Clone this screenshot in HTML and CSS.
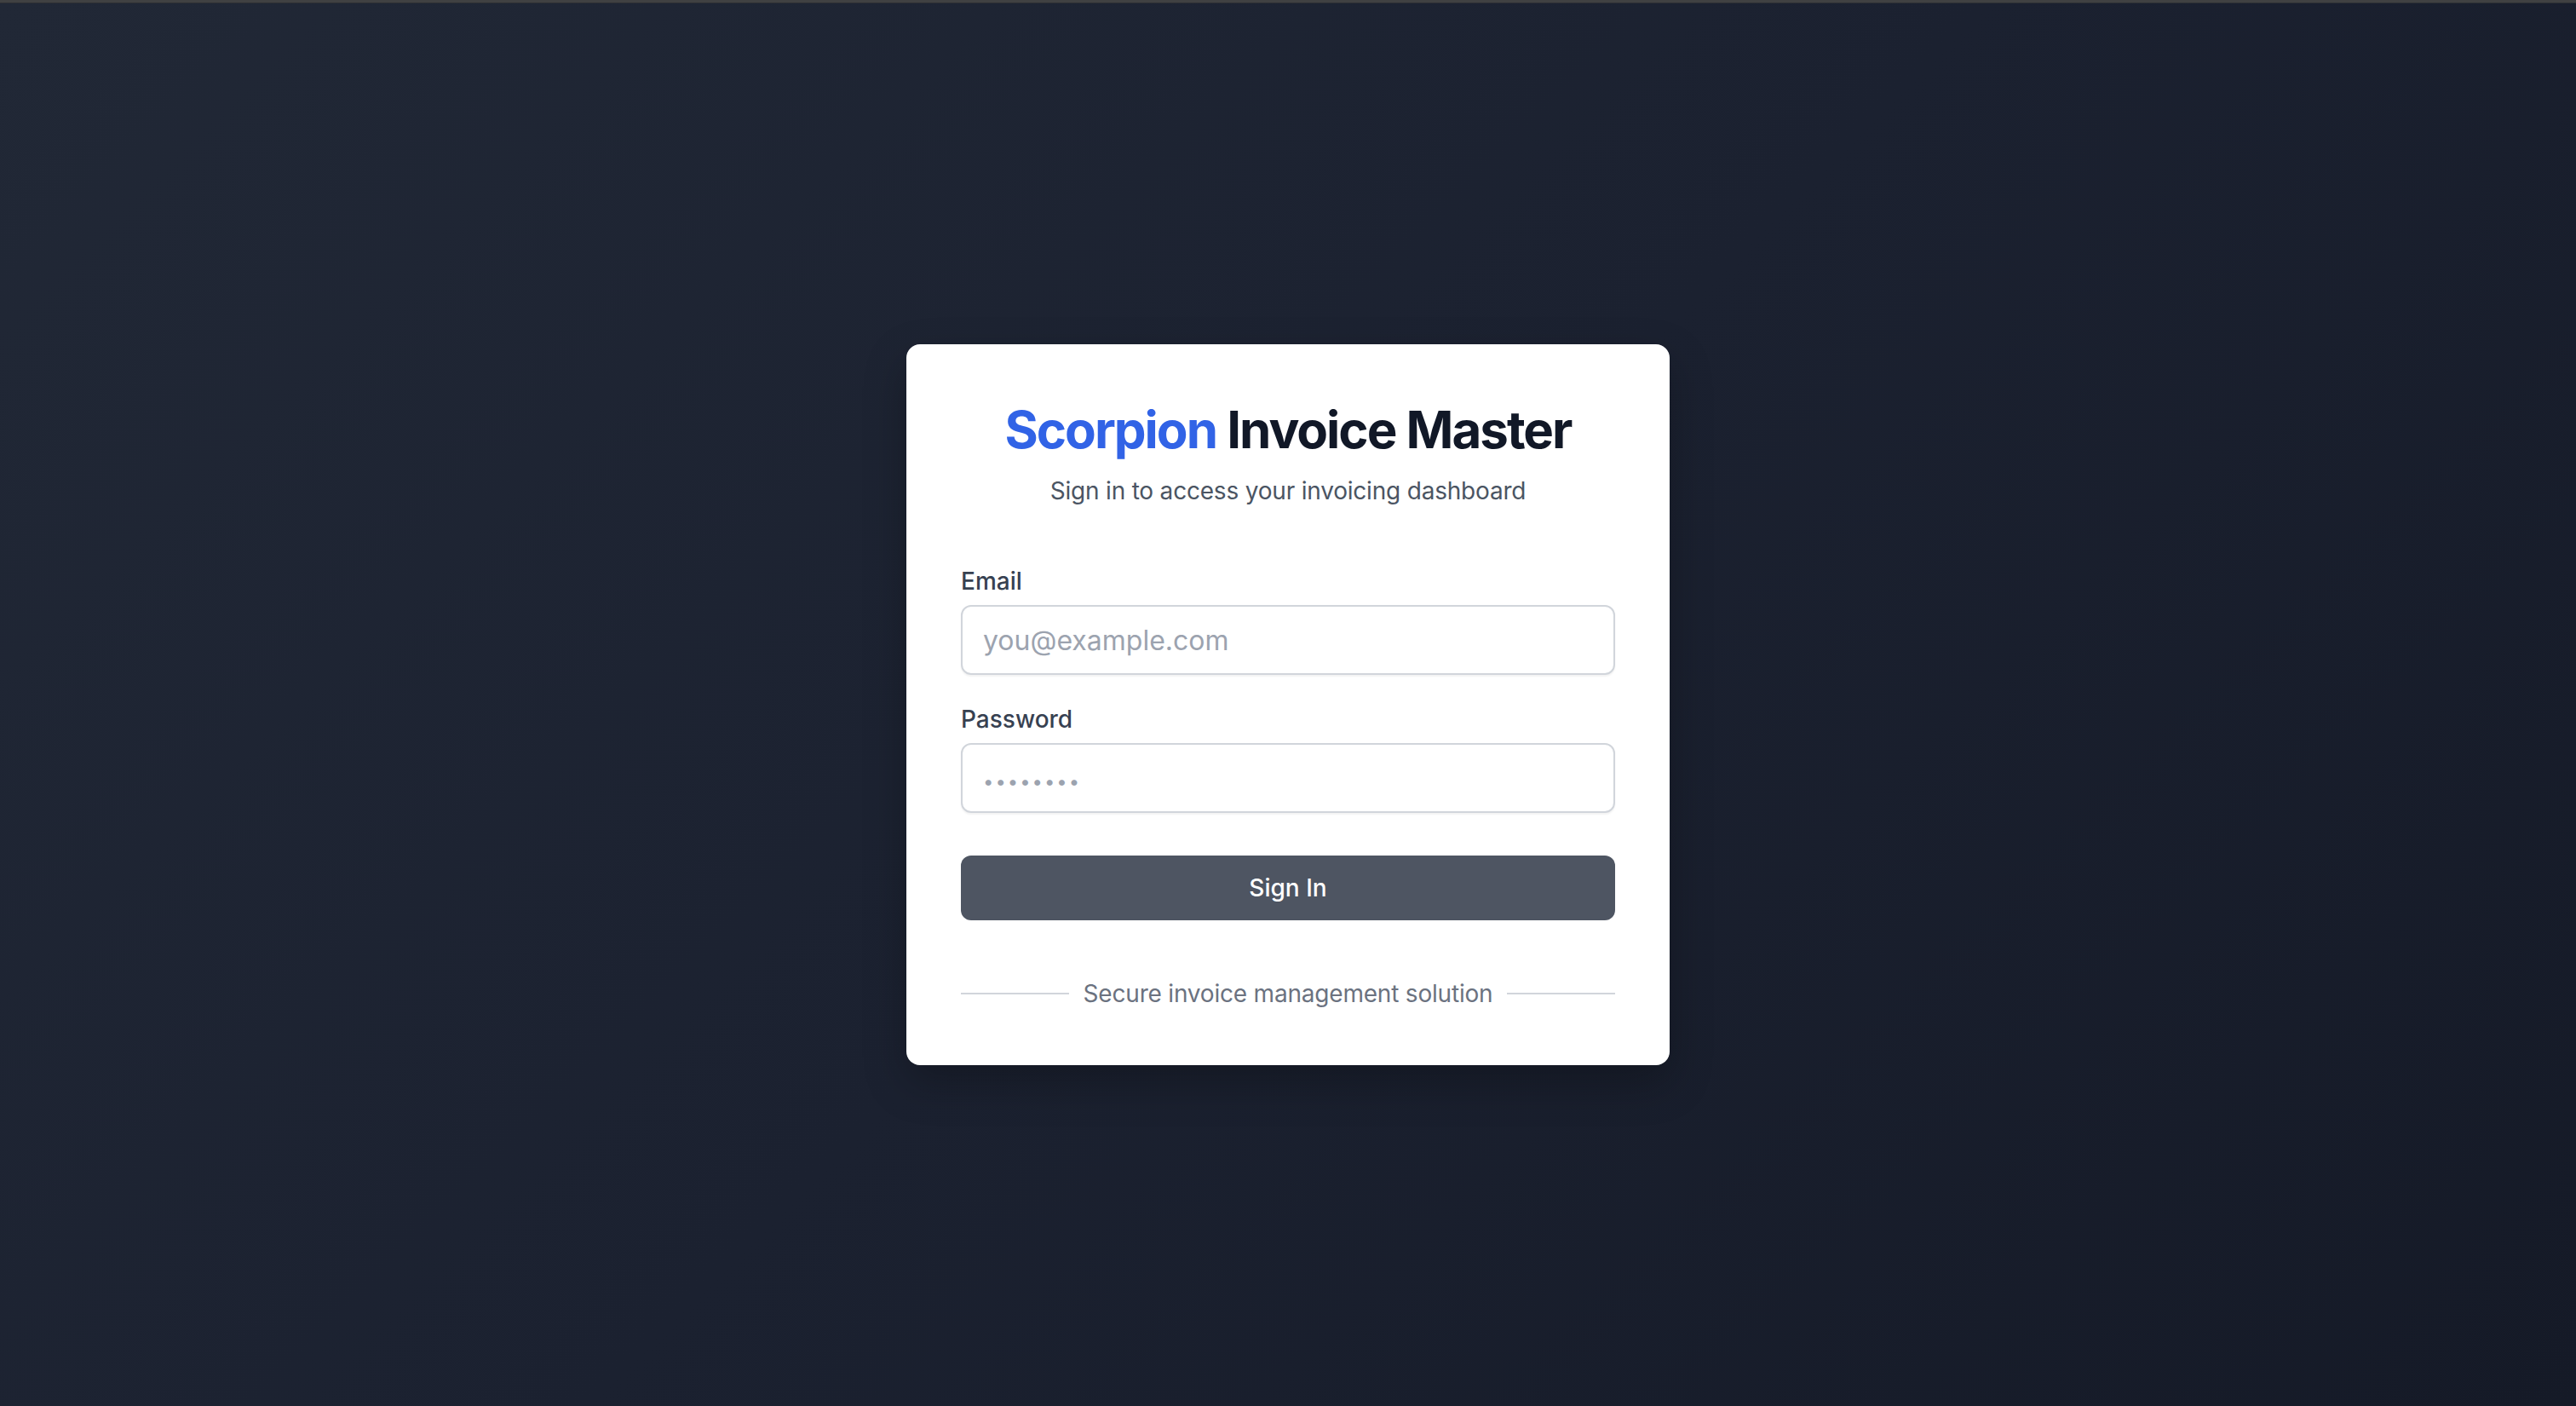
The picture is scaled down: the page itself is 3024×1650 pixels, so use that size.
FILE: index.html
```html
<!DOCTYPE html>
<html lang="en">
<head>
<meta charset="utf-8">
<title>Scorpion Invoice Master</title>
<link rel="stylesheet" href="styles.css">
</head>
<body>
<div class="topbar"></div>
<main class="page">
  <div class="card">
    <header class="head">
      <h1 class="title"><span class="brand">Scorpion</span> Invoice Master</h1>
      <p class="subtitle">Sign in to access your invoicing dashboard</p>
    </header>
    <form class="form">
      <div class="field">
        <label class="label" for="email">Email</label>
        <input class="input" id="email" type="email" placeholder="you@example.com">
      </div>
      <div class="field">
        <label class="label" for="password">Password</label>
        <input class="input pw" id="password" type="password" placeholder="••••••••">
      </div>
      <button class="btn" type="button">Sign In</button>
    </form>
    <div class="foot">
      <span class="line"></span>
      <span class="foot-text">Secure invoice management solution</span>
      <span class="line"></span>
    </div>
  </div>
</main>
</body>
</html>
```
FILE: styles.css
```css
* { box-sizing: border-box; }
html, body { margin: 0; padding: 0; height: 100%; }
body {
  font-family: Inter, "Noto Sans", "Liberation Sans", sans-serif;
  background: linear-gradient(135deg, #212836 0%, #1b2130 50%, #151a27 100%);
  display: flex;
  flex-direction: column;
}
.topbar { height: 4px; background: #404142; border-bottom: 1px solid #2b2e33; flex: none; }
.page {
  flex: 1;
  display: flex;
  align-items: center;
  justify-content: center;
}
.card {
  width: 896px;
  background: #ffffff;
  border-radius: 16px;
  padding: 64px 64px 64px;
  box-shadow: 0 20px 50px rgba(0,0,0,0.25);
}
.head { text-align: center; margin-bottom: 66px; }
.title {
  margin: 0;
  font-size: 60px;
  line-height: 72px;
  font-weight: 700;
  color: #111827;
  letter-spacing: -2px;
}
.brand { color: #3163e6; }
.subtitle {
  margin: 16px 0 0;
  font-size: 28px;
  line-height: 40px;
  color: #4b5563;
  letter-spacing: -0.2px;
}
.form { display: flex; flex-direction: column; }
.field { display: flex; flex-direction: column; margin-bottom: 32px; }
.field + .field { margin-bottom: 50px; }
.label {
  font-size: 28px;
  line-height: 40px;
  font-weight: 500;
  color: #374151;
  margin-bottom: 8px;
}
.input {
  height: 82px;
  border: 2px solid #d1d5db;
  border-radius: 12px;
  padding: 0 24px;
  font-family: inherit;
  font-size: 32px;
  color: #111827;
  background: #fff;
  box-shadow: 0 2px 2px rgba(0,0,0,0.05);
  outline: none;
}
.input::placeholder { color: #9ca3af; opacity: 1; }
.pw::placeholder { font-size: 22px; letter-spacing: 2px; }
.btn {
  height: 76px;
  border: none;
  border-radius: 12px;
  background: #4e5562;
  color: #ffffff;
  font-family: inherit;
  font-size: 28px;
  font-weight: 500;
}
.foot {
  margin-top: 66px;
  display: flex;
  align-items: center;
}
.line { flex: 1; height: 2px; background: #d1d5db; }
.foot-text {
  padding: 0 17px;
  font-size: 28px;
  line-height: 40px;
  color: #6b7280;
  letter-spacing: -0.2px;
}
```
